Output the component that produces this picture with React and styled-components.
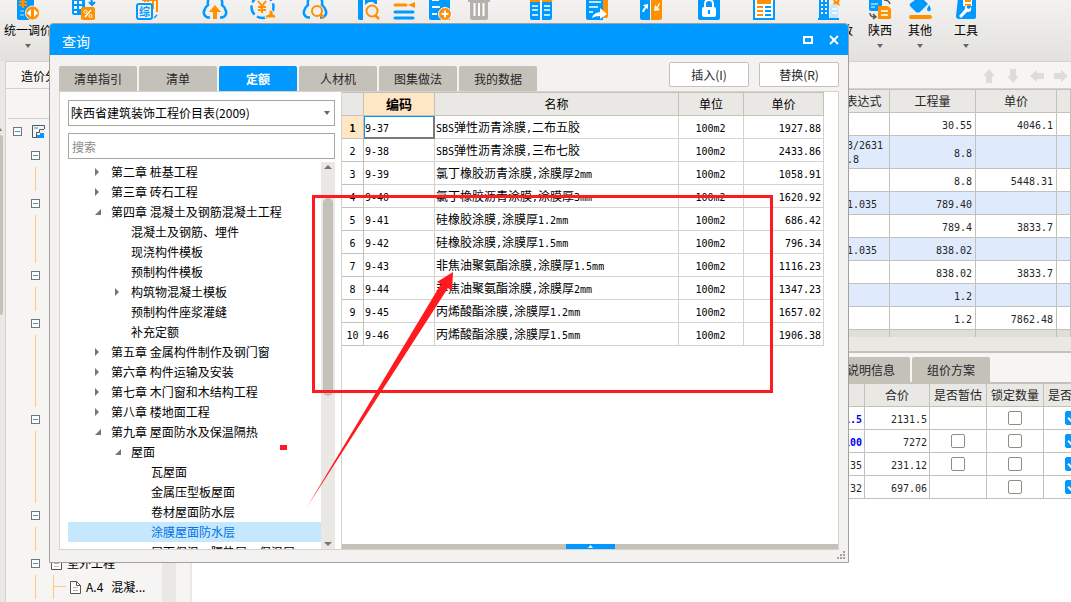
import React from 'react';
import styled, { createGlobalStyle, css } from 'styled-components';

const colors = {
  blue: '#0099ff',
  orange: '#ff9100',
  red: '#ff1a1f',
  panel: '#f3f2f0',
  header: '#e9e8e4',
  line: '#c4c1b9',
  softLine: '#d4d2cc',
  text: '#262626',
  zebra: '#dfebfc',
  peach: '#ffe6c4',
};

const uiFont = "'Noto Sans CJK SC', 'Liberation Sans', sans-serif";

const GlobalStyle = createGlobalStyle`
  * {
    box-sizing: border-box;
  }

  body {
    margin: 0;
    font: 12px/20px ${uiFont};
    color: ${colors.text};
    background: #fff;
  }

  button, input, select {
    font: inherit;
    color: inherit;
    margin: 0;
  }
`;

const Page = styled.div`
  position: relative;
  display: flex;
  flex-direction: column;
  height: 100vh;
  overflow: hidden;
`;

/* ---------- ribbon ---------- */

const Ribbon = styled.header`
  display: flex;
  flex: none;
  height: 61px;
  overflow: hidden;
  background: linear-gradient(#f3f2f1, #e2e1dd);
`;

const RibbonItem = styled.button`
  display: flex;
  flex: none;
  flex-direction: column;
  align-items: center;
  width: ${props => props.$width}px;
  padding: 0;
  border: none;
  background: none;
  color: #000;
  white-space: nowrap;
`;

const RibbonIcon = styled.svg`
  flex: none;
  width: 28px;
  height: 20px;
`;

const Caret = styled.span`
  border: 3px solid transparent;
  border-bottom: none;
  border-top: 4px solid #666;
  margin-top: 4px;
`;

/* ---------- main window ---------- */

const Body = styled.div`
  display: flex;
  flex: 1;
  min-height: 0;
`;

const Rail = styled.div`
  flex: none;
  width: 6px;
  padding-top: 67px;
  background: ${colors.header};
  border-right: 1px solid ${colors.softLine};
`;

const RailArrow = styled.svg`
  display: block;
  width: 2px;
  height: 3px;
`;

const RailThumb = styled.div`
  width: 3px;
  height: 180px;
  margin-top: 4px;
  background: ${colors.line};
  border-radius: 0 3px 3px 0;
`;

const Workspace = styled.div`
  display: flex;
  flex: 1;
  flex-direction: column;
  min-width: 0;
`;

const SubBar = styled.div`
  display: flex;
  flex: none;
  align-items: center;
  justify-content: space-between;
  height: 28px;
  padding: 2px 2px 0 15px;
  background: #f6f5f4;
  border-top: 1px solid ${colors.softLine};
  border-bottom: 1px solid ${colors.softLine};
  color: #000;
`;

const MoveButtons = styled.div`
  display: flex;
  gap: 8px;
`;

const MoveButton = styled.button`
  display: flex;
  width: 16px;
  height: 16px;
  padding: 0;
  border: none;
  background: none;
  transform: rotate(${props => props.$turn}deg);
`;

const Columns = styled.div`
  display: flex;
  flex: 1;
  min-height: 0;
`;

const ProjectTree = styled.aside`
  display: flex;
  flex: none;
  width: 186px;
  background: #f6f5f4;
  border-right: 2px solid ${colors.header};
`;

const ProjectRows = styled.div`
  flex: 1;
  min-width: 0;
  margin-left: 2px;
  color: #000;

  &::before {
    content: '';
    display: block;
    height: 29px;
    border-bottom: 1px solid ${colors.softLine};
  }
`;

const ProjectScroll = styled.div`
  width: 14px;
  margin-right: 14px;
  background: ${colors.header};
`;

const ProjectRow = styled.div`
  display: flex;
  align-items: center;
  gap: ${props => (props.$root ? 10 : 11)}px;
  height: 24px;
  padding-left: ${props => (props.$root ? 5 : 23)}px;
  white-space: nowrap;
`;

const Toggle = styled.button`
  display: flex;
  align-items: center;
  justify-content: center;
  width: 9px;
  height: 9px;
  padding: 0;
  border: 1px solid #77756f;
  background: #fff;

  &::before {
    content: '';
    width: 5px;
    height: 1px;
    background: #1aa7cc;
  }
`;

const Trunk = styled.span`
  flex: none;
  width: 1px;
  height: 24px;
  margin: 0 4px;
  background: #ffc780;
`;

const Branch = styled.span`
  width: 13px;
  height: 24px;
  margin-left: 2px;
  border-left: 1px solid #ffc780;
  background: linear-gradient(#ffc780, #ffc780) no-repeat 0 11px / 13px 1px;
`;

const Item = styled.span`
  display: flex;
  align-items: center;
  gap: 5px;
  margin-left: ${props => (props.$deep ? -7 : 0)}px;
`;

const Main = styled.main`
  display: flex;
  flex: 1;
  flex-direction: column;
  min-width: 0;
  overflow: hidden;
  background: #fff;
`;

const Table = styled.table`
  flex: none;
  width: 100%;
  table-layout: fixed;
  border-collapse: separate;
  border-spacing: 0;
`;

const cell = css`
  height: 23px;
  padding: 2px 2px 0 1px;
  border-right: 1px solid ${colors.line};
  border-bottom: 1px solid ${colors.line};
  line-height: 14px;
  white-space: nowrap;
  overflow: hidden;
  text-align: ${props => props.$align || 'right'};
`;

const Th = styled.th`
  ${cell}
  padding: 0;
  background: ${colors.header};
  font-weight: normal;
  text-align: center;
`;

const Td = styled.td`
  ${cell}
  background: ${props => (props.$shaded ? colors.zebra : '#fff')};
  ${props => props.$tall && 'height: 33px;'}
  ${props => props.$strong && 'color: #0000f0; font-weight: bold;'}
`;

const FootTd = styled.td`
  height: 7px;
  padding: 0;
  border-right: 1px solid ${colors.line};
  background: #dfded9;
`;

const QuantityTable = styled(Table)`
  border-top: 1px solid ${colors.line};

  td:nth-child(2) {
    padding-left: 39px;
  }

  td:nth-child(3), td:nth-child(4) {
    padding-right: 3px;
  }
`;

const Splitter = styled.div`
  flex: none;
  height: 16px;
  background: ${colors.header};
  border-bottom: 2px solid ${colors.line};
`;

const DetailTabs = styled.div`
  display: flex;
  flex: none;
  justify-content: flex-end;
  align-items: flex-end;
  gap: 2px;
  height: 31px;
  padding-right: 81px;
  background: #f6f5f4;
  border-bottom: 2px solid ${colors.line};
`;

const Tab = styled.button`
  width: 78px;
  height: 25px;
  padding: 0;
  border: none;
  border-radius: 2px 2px 0 0;
  background: ${props => (props.$active ? colors.blue : colors.line)};
  color: ${props => (props.$active ? '#fff' : colors.text)};
  font-weight: ${props => (props.$active ? 'bold' : 'normal')};
`;

const DetailTable = styled(Table)`
  width: calc(100% + 30px);
`;

const Check = styled.input`
  appearance: none;
  display: block;
  width: 14px;
  height: 14px;
  margin: -2px auto 0;
  border: 1px solid #8f8d86;
  border-radius: 2px;
  background: #fff;

  &:checked {
    border-color: ${colors.blue};
    background: ${colors.blue};
  }

  &:checked::before {
    content: '';
    display: block;
    width: 8px;
    height: 4px;
    margin: 2px 0 0 2px;
    border: solid #fff;
    border-width: 0 0 2px 2px;
    transform: rotate(-45deg);
  }
`;

const Mono = styled.span`
  font-family: 'DejaVu Sans Mono', 'Liberation Mono', monospace;
  font-size: 10px;
  ${props => props.$block && 'display: block;'}
`;

/* ---------- query dialog ---------- */

const Dialog = styled.section`
  position: absolute;
  inset: 23px 222px 39px 49px;
  display: flex;
  flex-direction: column;
  border: 1px solid #a3a19c;
  border-radius: 4px 4px 0 0;
  background: ${colors.panel};
  overflow: hidden;
`;

const TitleBar = styled.div`
  display: flex;
  flex: none;
  align-items: center;
  height: 31px;
  padding: 0 1px 0 12px;
  background: ${colors.blue};
  color: #fff;
`;

const DialogTitle = styled.h2`
  flex: 1;
  margin: 2px 0 0;
  font-size: 14px;
  font-weight: normal;
`;

const WindowButton = styled.button`
  display: flex;
  align-items: center;
  justify-content: center;
  width: 26px;
  height: 24px;
  padding: 0;
  border: none;
  background: none;
`;

const DialogBar = styled.div`
  display: flex;
  flex: none;
  align-items: flex-start;
  justify-content: space-between;
  height: 36px;
  padding: 7px 9px 0;
`;

const TabList = styled.div`
  display: flex;
  gap: 2px;
  margin-top: 4px;
`;

const Actions = styled.div`
  display: flex;
  gap: 10px;
`;

const ActionButton = styled.button`
  width: 80px;
  height: 25px;
  padding: 0;
  border: 1px solid ${colors.line};
  border-radius: 2px;
  background: #fff;
`;

const Panel = styled.div`
  display: flex;
  flex: 1;
  min-height: 0;
  margin: 0 9px 12px;
  border: 1px solid ${colors.softLine};
  background: #fff;
  color: #000;
`;

const Catalog = styled.div`
  display: flex;
  flex: none;
  flex-direction: column;
  width: 281px;
  padding: 8px 6px 0 8px;
`;

const Picker = styled.label`
  display: grid;
  align-items: center;

  & > * {
    grid-area: 1 / 1;
  }
`;

const PickerCaret = styled(Caret)`
  justify-self: end;
  margin: 0 5px 0 0;
  pointer-events: none;
`;

const Select = styled.select`
  appearance: none;
  height: 26px;
  padding: 0 16px 0 2px;
  border: 1px solid #a9a7a1;
  border-radius: 0;
  background: #fff;
`;

const Search = styled.input`
  height: 26px;
  margin: 7px 0 3px;
  padding: 0 3px;
  border: 1px solid #a9a7a1;
  background: #fff;

  &::placeholder {
    color: #8a8a8a;
  }
`;

const TreeBox = styled.div`
  display: flex;
  flex: 1;
  min-height: 0;
`;

const TreeList = styled.ul`
  flex: 1;
  margin: 0;
  padding: 0;
  list-style: none;
  overflow: hidden;
`;

const TreeItem = styled.li`
  display: flex;
  align-items: center;
  gap: 8px;
  height: 20px;
  padding-left: ${props => 23 + props.$level * 20}px;
  white-space: nowrap;
  ${props => props.$selected && css`
    background: #c5e8ff;
    color: #0073e6;
  `}
`;

const TreeScroll = styled.div`
  display: flex;
  flex-direction: column;
  align-items: center;
  width: 14px;
  padding: 3px 0;
  background: ${colors.header};
`;

const TreeThumb = styled.div`
  width: 10px;
  height: 198px;
  margin: 29px 0 auto;
  border-radius: 5px;
  background: ${colors.line};
`;

const ResultPane = styled.div`
  display: flex;
  flex: 1;
  flex-direction: column;
  min-width: 0;
  border-left: 1px solid ${colors.softLine};
`;

const ResultArea = styled.div`
  flex: 1;
  min-height: 0;
  padding-right: 14px;
  overflow: hidden;
`;

const ResultTable = styled(Table)`
  border-top: 1px solid ${colors.line};
`;

const ResultTh = styled(Th)`
  ${props => props.$active && css`
    background: ${colors.peach};
    font-weight: bold;
    font-size: 13px;
  `}
`;

const ResultTd = styled(Td)`
  border-color: ${colors.softLine};
  ${props => props.$focused && css`
    box-shadow: inset 1px 1px 0 ${colors.blue}, inset -1px -1px 0 #7c7a76;
    border-color: #7c7a76;
  `}
`;

const RowNumber = styled(Th)`
  padding-top: 2px;
  background: ${props => (props.$active ? colors.peach : '#fff')};
  font-weight: ${props => (props.$active ? 'bold' : 'normal')};
`;

const Drawer = styled.div`
  display: flex;
  flex: none;
  justify-content: center;
  height: 5px;
  background: ${colors.line};
`;

const DrawerHandle = styled.button`
  display: flex;
  align-items: center;
  justify-content: center;
  width: 49px;
  padding: 0;
  border: none;
  background: ${colors.blue};
`;

const Grip = styled.svg`
  position: absolute;
  right: 3px;
  bottom: 3px;
  width: 8px;
  height: 8px;
`;

/* ---------- mark-up drawn over the window ---------- */

const MarkBox = styled.div`
  position: absolute;
  left: 312px;
  top: 195px;
  width: 461px;
  height: 198px;
  border: 3px solid ${colors.red};
  pointer-events: none;
`;

const MarkDot = styled.div`
  position: absolute;
  left: 280px;
  top: 445px;
  width: 7px;
  height: 5px;
  background: ${colors.red};
`;

const MarkArrow = styled.svg`
  position: absolute;
  left: 300px;
  top: 265px;
  width: 160px;
  height: 250px;
  pointer-events: none;
`;

/* ---------- icons ---------- */

const B = colors.blue;
const O = colors.orange;

const Yen = ({ x, y, color = O }) => (
  <path
    d={`M${x - 4} ${y - 6}l4 5 4-5M${x} ${y - 1}v7M${x - 4} ${y}h8M${x - 4} ${y + 3}h8`}
    stroke={color}
    strokeWidth="2"
    fill="none"
  />
);

const Cloud = () => (
  <path
    d="M9 17.500H7.500a5 5 0 0 1-4-7.500C4 7 6 6 7 5 6-1 9-4 14-4s8 3 7 9c1 1 3 2 3.500 5a5 5 0 0 1-4 7.500H19"
    stroke={B}
    strokeWidth="2.500"
    fill="none"
  />
);

const icons = {
  unify: (
    <>
      <path d="M3-2h17v22H5q-2 0-2-2z" fill={B} />
      <Yen x={9} y={2} />
      <path d="M6 11h4M6 15h4" stroke="#7cc8ff" strokeWidth="1.500" />
      <circle cx="18.500" cy="13" r="7" fill={O} stroke="#f3f2f1" />
      <path d="M17 9v8l-4-4zM20 9v8l4-4z" fill="#fff" />
    </>
  ),
  percent: (
    <>
      <path d="M3-2h13v17H5q-2 0-2-2z" fill={B} />
      <path d="M5 1h3v3H5zM10 1h3v3h-3zM5 6h3v3H5zM10 6h3v3h-3zM5 11h3v2H5z" fill="#fff" />
      <path d="M18-1h3q2 0 2 5m-3-2 3 3 3-3" stroke={B} strokeWidth="2" fill="none" />
      <rect x="12" y="7" width="14" height="13" rx="2" fill={O} />
      <path d="m22 10-6 7" stroke="#fff" strokeWidth="1.500" />
      <circle cx="16.500" cy="11.500" r="1.500" fill="none" stroke="#fff" />
      <circle cx="21.500" cy="16" r="1.500" fill="none" stroke="#fff" />
    </>
  ),
  summary: (
    <>
      <path d="M9 0h15v12M20 0v9M12-1v3M15 0v2" stroke={O} strokeWidth="2" fill="none" />
      <path d="m21 18 3-3" stroke={B} strokeWidth="1.500" />
      <rect x="4" y="4" width="15" height="15" rx="2" fill="#f3f2f1" stroke={B} strokeWidth="2" />
      <text x="11.500" y="15.500" fontSize="11" fontWeight="bold" fill={B} textAnchor="middle">综</text>
    </>
  ),
  upload: (
    <>
      <Cloud />
      <path d="M14 5l6 7h-4v7h-4v-7H8z" fill={O} />
    </>
  ),
  price: (
    <>
      <circle cx="13.500" cy="7" r="11" fill="none" stroke={B} strokeWidth="2.500" strokeDasharray="10 3" />
      <Yen x={13} y={7} />
      <path d="M16 18q0-4 4-4-1-4 2-4t2 4q3 0 3 4z" fill={O} stroke="#f3f2f1" />
    </>
  ),
  cloudSearch: (
    <>
      <Cloud />
      <circle cx="16" cy="11" r="5" fill="#f3f2f1" stroke={O} strokeWidth="2" />
      <path d="m19 14 4 4" stroke={O} strokeWidth="2.500" />
    </>
  ),
  find: (
    <>
      <path d="M4-2h5v22H6q-2 0-2-2z" fill={B} />
      <path d="M11-2h12v6h-2l-2-2h-4l-4 3z" fill={B} />
      <circle cx="18" cy="11" r="5.500" fill="none" stroke={O} strokeWidth="2" />
      <path d="m21 15 4 4" stroke={O} strokeWidth="2.500" />
    </>
  ),
  insert: (
    <>
      <path d="M5 5h11" stroke={O} strokeWidth="3" strokeLinecap="round" />
      <path d="m25 2-7 3 7 3z" fill={O} />
      <path d="M5 12h18M5 18h18" stroke={B} strokeWidth="3" strokeLinecap="round" />
    </>
  ),
  add: (
    <>
      <path d="M3-2h21v22H5q-2 0-2-2z" fill={B} />
      <path d="M6 0h7M6 7h8M6 14h5" stroke="#fff" strokeWidth="2" />
      <circle cx="19" cy="14" r="6.500" fill={O} stroke="#fff" />
      <path d="M19 10.500v7M15.500 14h7" stroke="#fff" strokeWidth="2" />
    </>
  ),
  trash: (
    <>
      <path d="M3-2h22v4H3zM5 2h18v16q0 2-2 2H7q-2 0-2-2z" fill="#b5b2ab" />
      <path d="M9.500 3v13M14 3v13M18.500 3v13" stroke="#fff" strokeWidth="2" />
    </>
  ),
  compare: (
    <>
      <path d="M3-2h10v4H3zM15-2h10v4H15z" fill={O} />
      <path d="M3 2h10v18H5q-2 0-2-2zM15 2h10v16q0 2-2 2h-8z" fill={B} />
      <path d="M5 6h6M5 10h6M5 15h6M17 6h6M17 10h6M17 15h6" stroke="#fff" strokeWidth="1.500" />
    </>
  ),
  exportDoc: (
    <>
      <path d="M18-2h7v18q0 2-2 2h-5z" fill={O} />
      <path d="M3-2h17v22H5q-2 0-2-2z" fill={B} />
      <path d="M6 2h12M6 7h9M6 12h4" stroke="#fff" strokeWidth="1.500" />
      <path d="M9 18q1-5 8-6V8l7 6-7 5v-3q-5 0-8 2z" fill="#fff" />
    </>
  ),
  swap: (
    <>
      <path d="M4-2h10v22H6q-2 0-2-2z" fill={B} />
      <path d="M15-2h11v20q0 2-2 2h-9z" fill={O} />
      <path d="M6 12q1-4 3-5L7 5l5-1v5l-2-1q-1 2-2 4zM24 3q-1 3-2 5l2 2-6 1 1-6 2 2 2-4z" fill="#fff" />
    </>
  ),
  lock: (
    <>
      <path d="M3-2h22v20q0 2-2 2H5q-2 0-2-2z" fill={B} />
      <rect x="7" y="7" width="14" height="10" rx="2" fill="#fff" />
      <path d="M10 8V4q0-4 4-4t4 4v4" stroke="#fff" strokeWidth="2" fill="none" />
      <path d="M14 10v4" stroke={B} strokeWidth="2" />
    </>
  ),
  report: (
    <>
      <path d="M4-2h20v21H4z" fill="#fff" stroke={B} strokeWidth="2" />
      <path d="M7 2h14" stroke={O} strokeWidth="4" />
      <path d="M7 7h6M7 11h6M7 15h6" stroke={O} strokeWidth="2" />
      <path d="M15 7h6M15 11h6M15 15h6" stroke={B} strokeWidth="2" />
    </>
  ),
  building: (
    <>
      <path d="M4-2h10v20H4z" fill={B} />
      <path d="M6 1h2M10 1h2M6 5h2M10 5h2M6 9h2M10 9h2M6 13h2M10 13h2" stroke="#fff" strokeWidth="2" />
      <path d="M15 5h8v13h-8z" fill="#c5e8ff" />
      <path d="M17 9h5M17 13h5" stroke="#fff" strokeWidth="1.500" />
      <path d="M3 19h21" stroke={B} strokeWidth="2" />
      <path d="m17-2 4 3 4-2-1 4 1 3-4-2-3 1 1-3z" fill={O} />
    </>
  ),
  region: (
    <>
      <path d="M3-2h13v13H5q-2 0-2-2z" fill={B} />
      <path d="M5 4h7M5 7h4" stroke="#fff" />
      <path d="M12 6h10l3 3v9q0 1-2 1H12z" fill={O} />
      <path d="M15 11h7M15 15h7" stroke="#fff" strokeWidth="1.500" />
      <path d="M18 0q5 0 6 4M4 13q0 4 5 4m-2-3 3 3-3 2" stroke="#555" strokeWidth="1.500" fill="none" />
    </>
  ),
  bucket: (
    <>
      <path d="m14-4 8 8-8 8q-2 1-4 0L4 6q-1-2 1-3z" fill={B} />
      <path d="M23 5q3 4 1 6-3 1-3-2z" fill={B} />
      <path d="M5 17h19" stroke={O} strokeWidth="4" strokeLinecap="round" />
    </>
  ),
  tools: (
    <>
      <path d="M6-2h18v19q0 2-3 2H7q-3 0-3-3z" fill={B} />
      <path d="M11-2h9v8h-9z" fill="#fff" />
      <path d="M13 1h6M13 5h6" stroke={O} strokeWidth="2" />
      <path d="m7 16 6-7q-1-3 2-4v3l2 1 2-2q1 4-2 5h-2l-6 6z" fill="#fff" />
    </>
  ),
};

const ribbonItems = [
  { icon: 'unify', width: 56, label: '统一调价', menu: true },
  { icon: 'percent', width: 54 },
  { icon: 'summary', width: 74 },
  { icon: 'upload', width: 62 },
  { icon: 'price', width: 34 },
  { icon: 'cloudSearch', width: 70 },
  { icon: 'find', width: 36 },
  { icon: 'insert', width: 36 },
  { icon: 'add', width: 36 },
  { icon: 'trash', width: 42 },
  { icon: 'compare', width: 82 },
  { icon: 'exportDoc', width: 30 },
  { icon: 'swap', width: 76 },
  { icon: 'lock', width: 42 },
  { icon: 'report', width: 68 },
  { icon: 'building', width: 62, label: '批量修改' },
  { icon: 'region', width: 40, label: '陕西', menu: true },
  { icon: 'bucket', width: 40, label: '其他', menu: true },
  { icon: 'tools', width: 52, label: '工具', menu: true },
];

const DocIcon = () => (
  <svg width="11" height="13" viewBox="0 0 11 13">
    <path d="M.5.500h6l4 4v8H.5z" fill="#fff" stroke="#555" />
    <path d="M6.500.500v4h4" fill="none" stroke="#555" />
    <path d="M3 6.500h5M3 9.500h5" stroke="#bbb" />
  </svg>
);

const ProjectIcon = () => (
  <svg width="13" height="13" viewBox="0 0 13 13">
    <path d="M12.500 4V.500H.5v12H4" fill="none" stroke="#555" />
    <path d="M2 2h4v2H2z" fill="#7cc8ff" />
    <path d="M4.500 13V7.500h3v-3H12" fill="none" stroke="#555" />
    <path d="M5 10h3V8h4v5H5z" fill={B} />
  </svg>
);

const TreeCaret = ({ state }) => (
  <svg width="12" height="10" viewBox="0 0 12 10">
    {state === 'closed' && <path d="M4 1v8l4-4z" fill="#77756f" />}
    {state === 'open' && <path d="M10 2v6H4z" fill="#77756f" />}
  </svg>
);

const ScrollArrow = ({ down }) => (
  <svg width="8" height="4" viewBox="0 0 8 4">
    <path d={down ? 'M0 0h8L4 4z' : 'M0 4h8L4 0z'} fill="#77756f" />
  </svg>
);

/* ---------- data ---------- */

const projectRows = 'TLTLLTLTLLLTLLLTL'.split('');

const quantities = [
  [[], '30.55', '4046.1'],
  [['13/2631', '8.8'], '8.8', ''],
  [[], '8.8', '5448.31'],
  [['*1.035'], '789.40', ''],
  [[], '789.4', '3833.7'],
  [['*1.035'], '838.02', ''],
  [[], '838.02', '3833.7'],
  [[], '1.2', ''],
  [[], '1.2', '7862.48'],
];

const details = [
  { price: '1.5', total: '2131.5', strong: true },
  { price: '100', total: '7272', strong: true, estimate: true },
  { price: '35', total: '231.12', estimate: true },
  { price: '32', total: '697.06' },
];

const chapters = [
  [0, '第二章 桩基工程', 'closed'],
  [0, '第三章 砖石工程', 'closed'],
  [0, '第四章 混凝土及钢筋混凝土工程', 'open'],
  [1, '混凝土及钢筋、埋件'],
  [1, '现浇构件模板'],
  [1, '预制构件模板'],
  [1, '构筑物混凝土模板', 'closed'],
  [1, '预制构件座浆灌缝'],
  [1, '补充定额'],
  [0, '第五章 金属构件制作及钢门窗', 'closed'],
  [0, '第六章 构件运输及安装', 'closed'],
  [0, '第七章 木门窗和木结构工程', 'closed'],
  [0, '第八章 楼地面工程', 'closed'],
  [0, '第九章 屋面防水及保温隔热', 'open'],
  [1, '屋面', 'open'],
  [2, '瓦屋面'],
  [2, '金属压型板屋面'],
  [2, '卷材屋面防水层'],
  [2, '涂膜屋面防水层'],
  [2, '屋面保温、隔热层、保温层'],
];

const quotas = [
  ['9-37', 'SBS弹性沥青涂膜,二布五胶', '1927.88'],
  ['9-38', 'SBS弹性沥青涂膜,三布七胶', '2433.86'],
  ['9-39', '氯丁橡胶沥青涂膜,涂膜厚2mm', '1058.91'],
  ['9-40', '氯丁橡胶沥青涂膜,涂膜厚3mm', '1620.92'],
  ['9-41', '硅橡胶涂膜,涂膜厚1.2mm', '686.42'],
  ['9-42', '硅橡胶涂膜,涂膜厚1.5mm', '796.34'],
  ['9-43', '非焦油聚氨酯涂膜,涂膜厚1.5mm', '1116.23'],
  ['9-44', '非焦油聚氨酯涂膜,涂膜厚2mm', '1347.23'],
  ['9-45', '丙烯酸酯涂膜,涂膜厚1.2mm', '1657.02'],
  ['9-46', '丙烯酸酯涂膜,涂膜厚1.5mm', '1906.38'],
];

const dialogTabs = ['清单指引', '清单', '定额', '人材机', '图集做法', '我的数据'];

// half-width runs go in the mono face so they line up with the CJK grid
const GridText = ({ children }) =>
  children.split(/([\x20-\x7e]+)/).map((part, i) => (i % 2 ? <Mono key={i}>{part}</Mono> : part));

const MainWindow = () => (
  <>
    <Ribbon>
      {ribbonItems.map(item => (
        <RibbonItem key={item.icon} $width={item.width} aria-label={item.label || item.icon}>
          <RibbonIcon viewBox="0 0 28 20">{icons[item.icon]}</RibbonIcon>
          {item.label}
          {item.menu && <Caret />}
        </RibbonItem>
      ))}
    </Ribbon>
    <Body>
      <Rail>
        <RailArrow viewBox="0 0 2 3">
          <path d="M0 0l2 3H0z" fill="#77756f" />
        </RailArrow>
        <RailThumb />
      </Rail>
      <Workspace>
        <SubBar>
          造价分析
          <MoveButtons>
            {[['上移', 0], ['下移', 180], ['左移', 270], ['右移', 90]].map(([name, turn]) => (
              <MoveButton key={name} $turn={turn} aria-label={name}>
                <svg width="16" height="16" viewBox="0 0 16 16">
                  <path d="M8 1l6 7h-3v7H5V8H2z" fill="#dddcd8" />
                </svg>
              </MoveButton>
            ))}
          </MoveButtons>
        </SubBar>
        <Columns>
          <ProjectTree>
            <ProjectRows>
              <ProjectRow $root>
                <Toggle aria-label="折叠" />
                <ProjectIcon />
              </ProjectRow>
              {projectRows.map((kind, i) => (
                <ProjectRow key={i}>
                  {kind === 'T' ? <Toggle aria-label="折叠" /> : <Trunk />}
                </ProjectRow>
              ))}
              <ProjectRow>
                <Toggle aria-label="折叠" />
                <Item><DocIcon /> 室外工程</Item>
              </ProjectRow>
              <ProjectRow>
                <Trunk />
                <Branch />
                <Item $deep><DocIcon /> A.4&nbsp;&nbsp; 混凝...</Item>
              </ProjectRow>
            </ProjectRows>
            <ProjectScroll />
          </ProjectTree>
          <Main>
            <QuantityTable>
              <colgroup>
                <col />
                <col width="88" />
                <col width="86" />
                <col width="81" />
                <col width="14" />
              </colgroup>
              <thead>
                <tr>
                  <Th />
                  <Th>工程量表达式</Th>
                  <Th>工程量</Th>
                  <Th>单价</Th>
                  <Th />
                </tr>
              </thead>
              <tbody>
                {quantities.map(([formula, amount, price], i) => {
                  const shaded = i % 2 === 1;
                  const tall = formula.length > 1;
                  return (
                    <tr key={i}>
                      <Td $shaded={shaded} $tall={tall} />
                      <Td $shaded={shaded} $align="left">
                        {formula.map(line => <Mono key={line} $block={tall}>{line}</Mono>)}
                      </Td>
                      <Td $shaded={shaded}><Mono>{amount}</Mono></Td>
                      <Td $shaded={shaded}><Mono>{price}</Mono></Td>
                      <Td $shaded={shaded} />
                    </tr>
                  );
                })}
              </tbody>
              <tfoot>
                <tr><FootTd /><FootTd /><FootTd /><FootTd /><FootTd /></tr>
              </tfoot>
            </QuantityTable>
            <Splitter />
            <DetailTabs>
              <Tab>说明信息</Tab>
              <Tab>组价方案</Tab>
            </DetailTabs>
            <DetailTable>
              <colgroup>
                <col />
                <col width="65" />
                <col width="57" />
                <col width="57" />
                <col width="57" />
              </colgroup>
              <thead>
                <tr>
                  <Th />
                  <Th>合价</Th>
                  <Th>是否暂估</Th>
                  <Th>锁定数量</Th>
                  <Th>是否计价</Th>
                </tr>
              </thead>
              <tbody>
                {details.map(row => (
                  <tr key={row.total}>
                    <Td $strong={row.strong}><Mono>{row.price}</Mono></Td>
                    <Td><Mono>{row.total}</Mono></Td>
                    <Td>{row.estimate && <Check type="checkbox" aria-label="是否暂估" />}</Td>
                    <Td><Check type="checkbox" aria-label="锁定数量" /></Td>
                    <Td><Check type="checkbox" aria-label="是否计价" defaultChecked /></Td>
                  </tr>
                ))}
              </tbody>
            </DetailTable>
          </Main>
        </Columns>
      </Workspace>
    </Body>
  </>
);

const QueryDialog = () => (
  <Dialog role="dialog" aria-labelledby="query-title">
    <TitleBar>
      <DialogTitle id="query-title">查询</DialogTitle>
      <WindowButton aria-label="最大化">
        <svg width="10" height="8" viewBox="0 0 10 8">
          <path d="M1 1h8v6H1z" fill="none" stroke="#fff" strokeWidth="2" />
        </svg>
      </WindowButton>
      <WindowButton aria-label="关闭">
        <svg width="10" height="10" viewBox="0 0 10 10">
          <path d="M1 1l8 8M9 1L1 9" stroke="#fff" strokeWidth="2" />
        </svg>
      </WindowButton>
    </TitleBar>
    <DialogBar>
      <TabList>
        {dialogTabs.map(name => (
          <Tab key={name} $active={name === '定额'}>{name}</Tab>
        ))}
      </TabList>
      <Actions>
        <ActionButton>插入(I)</ActionButton>
        <ActionButton>替换(R)</ActionButton>
      </Actions>
    </DialogBar>
    <Panel>
      <Catalog>
        <Picker>
          <Select aria-label="定额库">
            <option>陕西省建筑装饰工程价目表(2009)</option>
          </Select>
          <PickerCaret />
        </Picker>
        <Search placeholder="搜索" aria-label="搜索" />
        <TreeBox>
          <TreeList>
            {chapters.map(([level, name, state]) => (
              <TreeItem key={name} $level={level} $selected={name === '涂膜屋面防水层'}>
                <TreeCaret state={state} />
                {name}
              </TreeItem>
            ))}
          </TreeList>
          <TreeScroll>
            <ScrollArrow />
            <TreeThumb />
            <ScrollArrow down />
          </TreeScroll>
        </TreeBox>
      </Catalog>
      <ResultPane>
        <ResultArea>
          <ResultTable>
            <colgroup>
              <col width="22" />
              <col width="71" />
              <col />
              <col width="65" />
              <col width="80" />
            </colgroup>
            <thead>
              <tr>
                <ResultTh />
                <ResultTh $active>编码</ResultTh>
                <ResultTh>名称</ResultTh>
                <ResultTh>单位</ResultTh>
                <ResultTh>单价</ResultTh>
              </tr>
            </thead>
            <tbody>
              {quotas.map(([code, name, price], i) => (
                <tr key={code}>
                  <RowNumber $active={i === 0}><Mono>{i + 1}</Mono></RowNumber>
                  <ResultTd $align="left" $focused={i === 0}><Mono>{code}</Mono></ResultTd>
                  <ResultTd $align="left"><GridText>{name}</GridText></ResultTd>
                  <ResultTd $align="center"><Mono>100m2</Mono></ResultTd>
                  <ResultTd><Mono>{price}</Mono></ResultTd>
                </tr>
              ))}
            </tbody>
          </ResultTable>
        </ResultArea>
        <Drawer>
          <DrawerHandle aria-label="展开">
            <svg width="5" height="3" viewBox="0 0 5 3">
              <path d="M0 3h5L2.500 0z" fill="#fff" />
            </svg>
          </DrawerHandle>
        </Drawer>
      </ResultPane>
    </Panel>
    <Grip viewBox="0 0 8 8">
      <path d="M6 0h2v2H6zM3 3h2v2H3zM6 3h2v2H6zM0 6h2v2H0zM3 6h2v2H3zM6 6h2v2H6z" fill="#a3a19c" />
    </Grip>
  </Dialog>
);

const App = () => (
  <Page>
    <GlobalStyle />
    <MainWindow />
    <QueryDialog />
    <MarkBox />
    <MarkDot />
    <MarkArrow viewBox="300 265 160 250">
      <path d="M307 507L441 284l-4-2 16-10-1 19-4-3z" fill={colors.red} />
    </MarkArrow>
  </Page>
);

export default App;
